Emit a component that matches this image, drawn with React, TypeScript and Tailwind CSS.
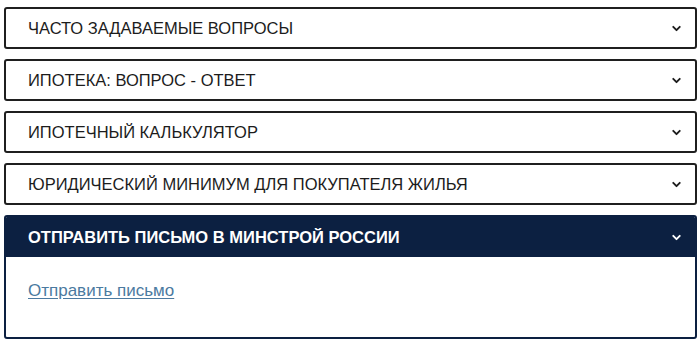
import { ChevronDown } from "lucide-react";

const items = [
  "ЧАСТО ЗАДАВАЕМЫЕ ВОПРОСЫ",
  "ИПОТЕКА: ВОПРОС - ОТВЕТ",
  "ИПОТЕЧНЫЙ КАЛЬКУЛЯТОР",
  "ЮРИДИЧЕСКИЙ МИНИМУМ ДЛЯ ПОКУПАТЕЛЯ ЖИЛЬЯ",
];

export default function App() {
  return (
    <div className="w-[700px] h-[339px] bg-white overflow-hidden font-['Liberation_Sans',Arial,sans-serif]">
      <div className="flex flex-col gap-[10px] pl-[4px] pr-[3px] pt-[7px]">
        {items.map((title) => (
          <div
            key={title}
            className="h-[42px] border-2 border-[#1f1f1f] rounded-[3px] flex items-center justify-between pl-[22px] pr-[12px]"
          >
            <span className="text-[16.5px] text-[#1c1c1c]">{title}</span>
            <ChevronDown className="w-[13px] h-[13px] text-[#1c1c1c]" strokeWidth={3.5} />
          </div>
        ))}
        <div className="h-[124px] border-2 border-[#0c2041] rounded-[3px] overflow-hidden flex flex-col">
          <div className="h-[40px] bg-[#0c2041] flex items-center justify-between pl-[22px] pr-[12px]">
            <span className="text-[16.5px] font-bold text-white">
              ОТПРАВИТЬ ПИСЬМО В МИНСТРОЙ РОССИИ
            </span>
            <ChevronDown className="w-[13px] h-[13px] text-white" strokeWidth={3.5} />
          </div>
          <div className="flex-1 pl-[22px] pt-[21px]">
            <a href="#" className="text-[17px] text-[#4b7aa0] underline underline-offset-2">
              Отправить письмо
            </a>
          </div>
        </div>
      </div>
    </div>
  );
}
